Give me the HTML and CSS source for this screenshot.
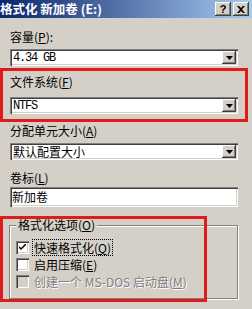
FILE: index.html
```html
<!DOCTYPE html>
<html lang="zh-CN">
<head>
  <meta charset="UTF-8">
  <title>格式化 新加卷 (E:)</title>
  <link rel="stylesheet" href="styles.css">
</head>
<body>
  <div class="window">
    <div class="titlebar">
      <span class="title">格式化 新加卷 (E:)</span>
      <div class="title-buttons">
        <span class="tbtn">?</span>
        <span class="tbtn">
          <svg width="8" height="7" viewBox="0 0 8 7"><path d="M0 0h2l2 2 2-2h2L5 3.5 8 7H6L4 5 2 7H0l3-3.5z" fill="#000"/></svg>
        </span>
      </div>
    </div>

    <div class="content">
      <div class="label">容量(<u>P</u>):</div>
      <div class="combo">
        <span class="value">4.34 GB</span>
        <span class="drop"><svg width="7" height="4" viewBox="0 0 7 4"><path d="M0 0h7L3.5 4z" fill="#000"/></svg></span>
      </div>

      <div class="label gap-fs">文件系统(<u>F</u>)</div>
      <div class="combo combo-fs">
        <span class="value">NTFS</span>
        <span class="drop"><svg width="7" height="4" viewBox="0 0 7 4"><path d="M0 0h7L3.5 4z" fill="#000"/></svg></span>
      </div>

      <div class="label gap-unit">分配单元大小(<u>A</u>)</div>
      <div class="combo">
        <span class="value cjk">默认配置大小</span>
        <span class="drop"><svg width="7" height="4" viewBox="0 0 7 4"><path d="M0 0h7L3.5 4z" fill="#000"/></svg></span>
      </div>

      <div class="label gap-vol">卷标(<u>L</u>)</div>
      <div class="textbox">新加卷</div>

      <fieldset class="group">
        <legend>格式化选项(<u>O</u>)</legend>
        <div class="check">
          <span class="box"><svg width="7" height="7" viewBox="0 0 7 7"><path d="M0 2l2 2 5-5v2L2 6 0 4z" fill="#000"/></svg></span>
          <span class="focus">快速格式化(<u>Q</u>)</span>
        </div>
        <div class="check">
          <span class="box"></span>
          <span class="text">启用压缩(<u>E</u>)</span>
        </div>
        <div class="check disabled">
          <span class="box"></span>
          <span class="text">创建一个 MS-DOS 启动盘(<u>M</u>)</span>
        </div>
      </fieldset>
    </div>

    <!-- red annotation frames -->
    <div class="mark mark-fs"></div>
    <div class="mark mark-opts"></div>
  </div>
</body>
</html>
```

FILE: styles.css
```css
body {
  margin: 0;
  background: #d4d0c8;
  font-family: "Noto Sans CJK SC", sans-serif;
  font-size: 12px;
  color: #000;
}
.window {
  position: relative;
  width: 252px;
  height: 309px;
  overflow: hidden;
  background: #d4d0c8;
}
.titlebar {
  height: 18px;
  display: flex;
  align-items: center;
  justify-content: space-between;
  padding-right: 3px;
  background: linear-gradient(to right, #0a246a, #a6caf0);
}
.title {
  color: #fff;
  font-weight: bold;
  font-size: 12.5px;
  line-height: 18px;
  white-space: nowrap;
}
.title-buttons {
  display: flex;
  gap: 2px;
}
.tbtn {
  width: 16px;
  height: 14px;
  display: flex;
  align-items: center;
  justify-content: center;
  background: #d4d0c8;
  box-shadow: inset -1px -1px #404040, inset 1px 1px #fff, inset -2px -2px #808080;
  font: bold 11px "Liberation Sans", sans-serif;
}
.content {
  padding: 12px 14px 0 10px;
}
.label {
  height: 14px;
  line-height: 14px;
  white-space: nowrap;
}
.gap-fs {
  margin-top: 9px;
}
.gap-unit {
  margin-top: 10px;
}
.gap-vol {
  margin-top: 11px;
}
.combo {
  height: 17px;
  margin-top: 5px;
  padding: 0 2px 0 3px;
  display: flex;
  align-items: center;
  justify-content: space-between;
  background: #fff;
  box-shadow: inset 1px 1px #808080, inset 2px 2px #404040, inset -1px -1px #fff, inset -2px -2px #d4d0c8;
}
.combo-fs {
  margin-top: 8px;
}
.value {
  font: 12px "Liberation Mono", monospace;
  letter-spacing: -1.2px;
}
.value.cjk {
  font: 12px "Noto Sans CJK SC", sans-serif;
  letter-spacing: 0;
}
.drop {
  width: 14px;
  height: 13px;
  display: flex;
  align-items: center;
  justify-content: center;
  background: #d4d0c8;
  box-shadow: inset -1px -1px #404040, inset 1px 1px #fff, inset -2px -2px #808080;
}
.textbox {
  height: 20px;
  margin-top: 2px;
  padding-left: 2px;
  line-height: 20px;
  background: #fff;
  box-shadow: inset 1px 1px #808080, inset 2px 2px #404040, inset -1px -1px #fff, inset -2px -2px #d4d0c8;
}
.group {
  margin: 11px 0 0 -1px;
  padding: 7px 6px 8px 6px;
  border: 1px solid #808080;
  box-shadow: inset 1px 1px #fff, 1px 1px #fff;
}
.group legend {
  padding: 0 2px;
  line-height: 14px;
  background: #d4d0c8;
}
.check {
  height: 17px;
  display: flex;
  align-items: center;
  gap: 4px;
  white-space: nowrap;
}
.box {
  width: 13px;
  height: 13px;
  flex: none;
  box-sizing: border-box;
  display: flex;
  align-items: center;
  justify-content: center;
  background: #fff;
  box-shadow: inset 1px 1px #808080, inset 2px 2px #404040, inset -1px -1px #fff, inset -2px -2px #d4d0c8;
}
.focus {
  padding: 0 1px;
  outline: 1px dotted #000;
  line-height: 15px;
}
.text {
  padding: 0 1px;
}
.disabled .box {
  background: #d4d0c8;
}
.disabled .text {
  color: #808080;
  text-shadow: 1px 1px #fff;
}
.mark {
  position: absolute;
  box-sizing: border-box;
  border: 3px solid #e01b1b;
  pointer-events: none;
}
.mark-fs {
  left: 0;
  top: 68px;
  width: 248px;
  height: 54px;
}
.mark-opts {
  left: 0;
  top: 216px;
  width: 207px;
  height: 86px;
}
```
